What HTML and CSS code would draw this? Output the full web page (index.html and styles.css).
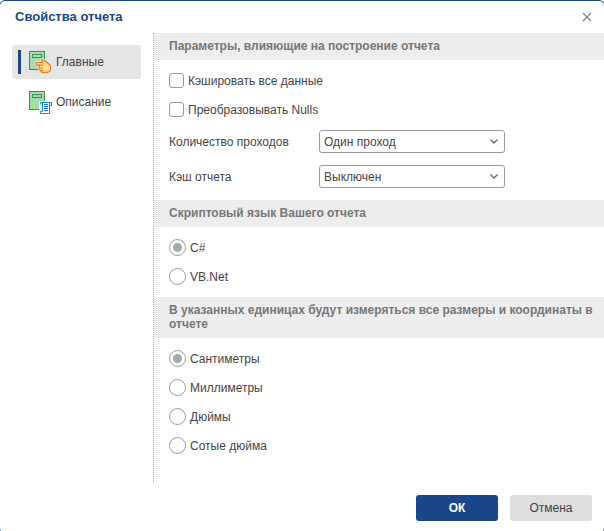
FILE: index.html
```html
<!DOCTYPE html>
<html lang="ru">
<head>
    <meta charset="UTF-8">
    <meta name="viewport" content="width=device-width, initial-scale=1.0">
    <title>Свойства отчета</title>
    <link rel="stylesheet" href="styles.css">
</head>
<body>
    <form class="dialog">
        <header class="dialog-header">
            <h1>Свойства отчета</h1>
            <button type="button" class="close" aria-label="Закрыть">
                <svg width="10" height="10" viewBox="0 0 10 10"><path d="M1 1l8 8M9 1l-8 8" fill="none" stroke="#777" stroke-width="1.1"/></svg>
            </button>
        </header>

        <div class="dialog-body">
            <nav class="tabs">
                <button type="button" class="tab active">
                    <svg class="tab-icon" width="24" height="24" viewBox="0 0 24 24">
                        <rect x="1.5" y="1.5" width="15" height="18" fill="#a5dcae" stroke="#2f9650"/>
                        <rect x="4.5" y="4.5" width="9" height="3" fill="#a5dcae" stroke="#2f9650"/>
                        <path d="M9.200 12.500h5.300l-.9-1.200c-.6-1.200.9-2 1.800-1.200l4.600 3.200c2.300 1.600 2.800 2.900 2.800 4.700 0 2.600-2 4.500-4.600 4.500h-3.200c-1.300 0-2-.8-1.700-1.700-1.100-.2-1.700-1.100-1.200-2-.9-.3-1.300-1.300-.7-2.200l.4-1.400H9.200c-1.800 0-1.800-2.700 0-2.700z" fill="#fcdc94" stroke="#e5e5e5" stroke-width="3" stroke-linejoin="round"/>
                        <path d="M9.200 12.500h5.300l-.9-1.200c-.6-1.200.9-2 1.800-1.200l4.600 3.200c2.300 1.600 2.800 2.900 2.800 4.700 0 2.600-2 4.500-4.600 4.500h-3.200c-1.300 0-2-.8-1.700-1.700-1.100-.2-1.700-1.100-1.200-2-.9-.3-1.300-1.300-.7-2.200l.4-1.400H9.200c-1.800 0-1.800-2.700 0-2.700z" fill="#fcdc94" stroke="#e8780c" stroke-width="1.200" stroke-linejoin="round"/>
                        <path d="M12 15.200h3.300M12.600 18h2.700M13.800 20.500h2" stroke="#e8780c" fill="none"/>
                    </svg>
                    Главные
                </button>
                <button type="button" class="tab">
                    <svg class="tab-icon" width="24" height="24" viewBox="0 0 24 24">
                        <rect x="1.5" y="1.5" width="15" height="18" fill="#a5dcae" stroke="#2f9650"/>
                        <rect x="4.5" y="4.5" width="9" height="3" fill="#a5dcae" stroke="#2f9650"/>
                        <path d="M11 11h13v5h-2v8H11z" fill="#fff"/>
                        <path d="M12.500 14.500v-2h11v3h-2M14.500 12.500v9M21.500 12.500v11h-9v-2h2" fill="#fff" stroke="#1583c5"/>
                        <path d="M16 14.500h4M16 16.500h4M16 18.500h4M16 20.500h4" stroke="#1583c5"/>
                    </svg>
                    Описание
                </button>
            </nav>

            <main class="content">
                <section>
                    <h2>Параметры, влияющие на построение отчета</h2>
                    <div class="options">
                        <label class="option check"><input type="checkbox">Кэшировать все данные</label>
                        <label class="option check"><input type="checkbox">Преобразовывать Nulls</label>
                    </div>
                    <div class="fields">
                        <label for="passes">Количество проходов</label>
                        <select id="passes">
                            <option>Один проход</option>
                            <option>Два прохода</option>
                        </select>
                        <label for="cache">Кэш отчета</label>
                        <select id="cache">
                            <option>Выключен</option>
                            <option>Включен</option>
                        </select>
                    </div>
                </section>

                <section>
                    <h2>Скриптовый язык Вашего отчета</h2>
                    <div class="options">
                        <label class="option"><input type="radio" name="language" checked>C#</label>
                        <label class="option"><input type="radio" name="language">VB.Net</label>
                    </div>
                </section>

                <section>
                    <h2>В указанных единицах будут измеряться все размеры и координаты в отчете</h2>
                    <div class="options">
                        <label class="option"><input type="radio" name="units" checked>Сантиметры</label>
                        <label class="option"><input type="radio" name="units">Миллиметры</label>
                        <label class="option"><input type="radio" name="units">Дюймы</label>
                        <label class="option"><input type="radio" name="units">Сотые дюйма</label>
                    </div>
                </section>
            </main>
        </div>

        <footer class="dialog-footer">
            <button type="submit" class="btn primary">ОК</button>
            <button type="button" class="btn">Отмена</button>
        </footer>
    </form>
</body>
</html>
```
FILE: styles.css
```css
* {
    box-sizing: border-box;
}
html {
    overflow: hidden;
}
body {
    margin: 0;
    background-color: #fff;
    color: #444;
    font-family: Arial, "Liberation Sans", sans-serif;
    font-size: 12px;
    line-height: 14px;
}
button,
select {
    font: inherit;
    color: inherit;
}
.dialog {
    display: flex;
    flex-direction: column;
    min-height: calc(100vh + 3px);
    margin: 0 -1px;
    border: 1px solid #19478a;
    border-radius: 6px;
}
.dialog-header {
    display: flex;
    align-items: center;
    justify-content: space-between;
    height: 32px;
    padding: 0 12px 0 15px;
}
.dialog-header h1 {
    margin: 0;
    color: #19478a;
    font-size: 13px;
    font-weight: bold;
}
.close {
    display: flex;
    padding: 0;
    border: none;
    background: none;
    cursor: pointer;
}
.dialog-body {
    display: flex;
    flex: 1;
}

/* Left tabs */
.tabs {
    display: flex;
    flex-direction: column;
    flex: none;
    gap: 6px;
    width: 153px;
    padding: 12px;
}
.tab {
    display: flex;
    align-items: center;
    height: 34px;
    padding: 0 6px;
    border: none;
    border-radius: 3px;
    background: none;
    text-align: left;
    cursor: pointer;
}
.tab::before {
    content: "";
    width: 3px;
    height: 24px;
    margin-right: 7px;
}
.tab.active {
    background-color: #e5e5e5;
}
.tab.active::before {
    background-color: #19478a;
}
.tab-icon {
    margin-right: 4px;
}

/* Settings */
.content {
    flex: 1;
    min-width: 0;
    border-left: 1px dotted #aaa;
}
.content h2 {
    margin: 0;
    padding: 6px 8px 7px 15px;
    background-color: #ededed;
    color: #777;
    font-size: 12px;
    font-weight: bold;
}
.options {
    padding: 6px 15px;
}
.option {
    display: flex;
    align-items: center;
    gap: 4px;
    height: 29px;
}
.option input {
    appearance: none;
    flex: none;
    width: 17px;
    height: 17px;
    margin: 0;
    border: 1px solid #999;
    border-radius: 50%;
    background-color: #fff;
}
.check input {
    width: 15px;
    height: 15px;
    border-radius: 3px;
}
.option input[type="radio"]:checked {
    background-image: radial-gradient(circle, #a9a9a9 4px, transparent 5px);
}
.option input[type="checkbox"]:checked {
    background-color: #a9a9a9;
}
.fields {
    display: grid;
    grid-template-columns: 150px 186px;
    row-gap: 12px;
    align-items: center;
    padding: 0 15px 12px;
}
.fields select {
    appearance: none;
    height: 23px;
    padding: 0 20px 0 4px;
    border: 1px solid #999;
    border-radius: 3px;
    background: #fff url("data:image/svg+xml,%3Csvg xmlns='http://www.w3.org/2000/svg' width='8' height='5'%3E%3Cpath d='M.5 .5L4 4l3.500-3.500' fill='none' stroke='%23666' stroke-width='1.300'/%3E%3C/svg%3E") no-repeat right 6px center;
}

/* Buttons */
.dialog-footer {
    display: flex;
    justify-content: flex-end;
    gap: 12px;
    padding: 12px;
}
.btn {
    width: 82px;
    height: 26px;
    border: none;
    border-radius: 3px;
    background-color: #ddd;
    cursor: pointer;
}
.btn.primary {
    background-color: #19478a;
    color: #fff;
    font-weight: bold;
}
```
